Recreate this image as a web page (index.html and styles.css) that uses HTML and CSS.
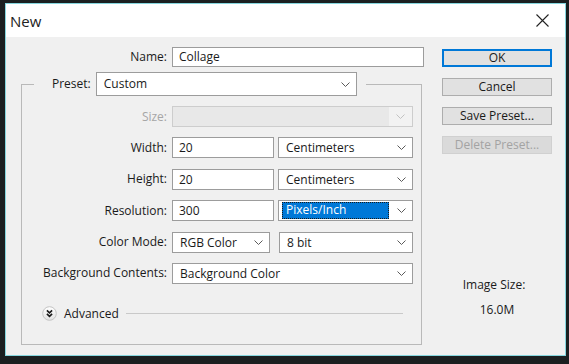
FILE: index.html
```html
<!DOCTYPE html>
<html lang="en">
<head>
  <meta charset="UTF-8">
  <title>New</title>
  <link rel="stylesheet" href="styles.css">
</head>
<body>
  <div class="window">
    <div class="titlebar">
      <span class="title">New</span>
      <svg class="close" width="13" height="13" viewBox="0 0 13 13"><path d="M0.5 0.5 L12.5 12.5 M12.5 0.5 L0.5 12.5" stroke="#222" stroke-width="1.1" fill="none"/></svg>
    </div>
    <div class="content">
      <div class="form">
        <div class="row row-name">
          <span class="lbl">Name:</span>
          <div class="field input">Collage</div>
        </div>
        <fieldset class="preset-box">
          <legend class="preset">
            <span class="lbl">Preset:</span>
            <div class="field select preset-select">
              <span>Custom</span>
              <svg class="chev" width="9" height="5" viewBox="0 0 9 5"><path d="M0.5 0.5 L4.5 4.5 L8.5 0.5" stroke="#5a5a5a" fill="none"/></svg>
            </div>
          </legend>
          <div class="rows">
            <div class="row">
              <span class="lbl disabled">Size:</span>
              <div class="field select size-select">
                <span></span>
                <span class="size-drop"><svg width="9" height="5" viewBox="0 0 9 5"><path d="M0.5 0.5 L4.5 4.5 L8.5 0.5" stroke="#c2c2c2" fill="none"/></svg></span>
              </div>
            </div>
            <div class="row">
              <span class="lbl">Width:</span>
              <div class="pair">
                <div class="field input">20</div>
                <div class="field select">
                  <span>Centimeters</span>
                  <svg class="chev" width="9" height="5" viewBox="0 0 9 5"><path d="M0.5 0.5 L4.5 4.5 L8.5 0.5" stroke="#5a5a5a" fill="none"/></svg>
                </div>
              </div>
            </div>
            <div class="row">
              <span class="lbl">Height:</span>
              <div class="pair">
                <div class="field input">20</div>
                <div class="field select">
                  <span>Centimeters</span>
                  <svg class="chev" width="9" height="5" viewBox="0 0 9 5"><path d="M0.5 0.5 L4.5 4.5 L8.5 0.5" stroke="#5a5a5a" fill="none"/></svg>
                </div>
              </div>
            </div>
            <div class="row">
              <span class="lbl">Resolution:</span>
              <div class="pair">
                <div class="field input">300</div>
                <div class="field select focused">
                  <span class="highlight">Pixels/Inch</span>
                  <svg class="chev" width="9" height="5" viewBox="0 0 9 5"><path d="M0.5 0.5 L4.5 4.5 L8.5 0.5" stroke="#5a5a5a" fill="none"/></svg>
                </div>
              </div>
            </div>
            <div class="row">
              <span class="lbl">Color Mode:</span>
              <div class="pair pair-mode">
                <div class="field select">
                  <span>RGB Color</span>
                  <svg class="chev" width="9" height="5" viewBox="0 0 9 5"><path d="M0.5 0.5 L4.5 4.5 L8.5 0.5" stroke="#5a5a5a" fill="none"/></svg>
                </div>
                <div class="field select">
                  <span>8 bit</span>
                  <svg class="chev" width="9" height="5" viewBox="0 0 9 5"><path d="M0.5 0.5 L4.5 4.5 L8.5 0.5" stroke="#5a5a5a" fill="none"/></svg>
                </div>
              </div>
            </div>
            <div class="row">
              <span class="lbl">Background Contents:</span>
              <div class="field select">
                <span>Background Color</span>
                <svg class="chev" width="9" height="5" viewBox="0 0 9 5"><path d="M0.5 0.5 L4.5 4.5 L8.5 0.5" stroke="#5a5a5a" fill="none"/></svg>
              </div>
            </div>
          </div>
          <div class="advanced">
            <svg class="adv-icon" width="15" height="15" viewBox="0 0 15 15">
              <defs>
                <linearGradient id="advBg" x1="0" y1="0" x2="0" y2="1">
                  <stop offset="0" stop-color="#ffffff"/>
                  <stop offset="1" stop-color="#e2e2e2"/>
                </linearGradient>
              </defs>
              <circle cx="7.5" cy="7.5" r="6.8" fill="url(#advBg)" stroke="#c3c3c3"/>
              <path d="M4.9 4.4 L7.5 6.9 L10.1 4.4 M4.9 7.8 L7.5 10.3 L10.1 7.8" stroke="#1a1a1a" stroke-width="1.6" fill="none"/>
            </svg>
            <span>Advanced</span>
            <span class="adv-line"></span>
          </div>
        </fieldset>
      </div>
      <div class="side">
        <div class="btn btn-default">OK</div>
        <div class="btn">Cancel</div>
        <div class="btn">Save Preset...</div>
        <div class="btn btn-disabled">Delete Preset...</div>
        <div class="img-info">
          <div class="img-label">Image Size:</div>
          <div class="img-value">16.0M</div>
        </div>
      </div>
    </div>
  </div>
</body>
</html>
```

FILE: styles.css
```css
body {
  margin: 0;
  background: #1b1f20;
  font-family: "Open Sans", "Noto Sans", sans-serif;
  font-size: 12px;
  line-height: 16px;
  color: #1a1a1a;
}
.window {
  margin: 3px 0 0 5px;
  width: 561px;
  height: 353px;
  box-sizing: border-box;
  border: 1px solid #86d6de;
  background: #f0f0f0;
  display: flex;
  flex-direction: column;
}
.titlebar {
  height: 33px;
  flex: none;
  background: #fff;
  display: flex;
  align-items: center;
  justify-content: space-between;
  padding: 0 16px 0 4px;
}
.title {
  font-size: 15px;
  line-height: 20px;
  color: #222;
}
.content {
  display: grid;
  grid-template-columns: 436px 110px;
  padding-top: 10px;
}
.form {
  padding-left: 15px;
}
.row {
  display: grid;
  grid-template-columns: 145px 1fr;
  column-gap: 5px;
  align-items: center;
}
.row-name {
  grid-template-columns: 146px 252px;
}
.lbl {
  text-align: right;
  white-space: nowrap;
}
.lbl.disabled {
  color: #a6a6a6;
}
.field {
  height: 21px;
  box-sizing: border-box;
  border: 1px solid #9c9c9c;
  background: #fff;
  line-height: 19px;
  white-space: nowrap;
}
.input {
  padding-left: 6px;
}
.row-name .input {
  height: 20px;
  line-height: 18px;
}
.select {
  display: flex;
  align-items: center;
  justify-content: space-between;
  padding: 0 6px 0 7px;
}
.chev {
  flex: none;
}
.focused {
  padding-left: 3px;
}
.highlight {
  display: block;
  width: 107px;
  height: 17px;
  box-sizing: border-box;
  line-height: 15px;
  padding-left: 4px;
  background: #0078d7;
  color: #fff;
  outline: 1px dotted #1a1a1a;
  outline-offset: -1px;
}
.size-select {
  background: #e8e8e8;
  border-color: #cdcdcd;
  padding: 0;
}
.size-drop {
  width: 23px;
  height: 100%;
  background: #f2f2f2;
  display: flex;
  align-items: center;
  justify-content: center;
}
.pair {
  display: grid;
  grid-template-columns: 102px 1fr;
  column-gap: 4px;
}
.pair-mode {
  grid-template-columns: 98px 1fr;
  column-gap: 9px;
}
.preset-box {
  margin: 5px 0 0 0;
  width: 401px;
  box-sizing: border-box;
  padding: 10px 8px 22px 0;
  border: 1px solid #b9b9b9;
  min-inline-size: 0;
}
.preset {
  margin-left: 12px;
  padding: 0 9px 0 18px;
  display: flex;
  align-items: center;
  gap: 5px;
}
.preset .lbl {
  text-align: left;
}
.preset-select {
  width: 261px;
  height: 24px;
  line-height: 22px;
}
.rows {
  display: flex;
  flex-direction: column;
  gap: 10.4px;
}
.advanced {
  margin-top: 22px;
  padding-left: 20px;
  height: 16px;
  display: flex;
  align-items: center;
  gap: 7px;
}
.adv-icon {
  flex: none;
}
.adv-line {
  flex: 1;
  margin: 0 10px 0 0;
  border-top: 1px solid #c9c9c9;
}
.side {
  display: flex;
  flex-direction: column;
  gap: 11px;
  padding-top: 2px;
}
.btn {
  height: 18px;
  box-sizing: border-box;
  border: 1px solid #adadad;
  background: #e1e1e1;
  text-align: center;
  line-height: 16px;
}
.btn-default {
  border: 2px solid #0078d7;
  line-height: 14px;
}
.btn-disabled {
  background: #dadada;
  border-color: #d0d0d0;
  color: #a3a3a3;
}
.img-info {
  margin-top: 112px;
  text-align: center;
}
.img-label {
  padding-right: 6px;
}
.img-value {
  margin-top: 9px;
}
```
